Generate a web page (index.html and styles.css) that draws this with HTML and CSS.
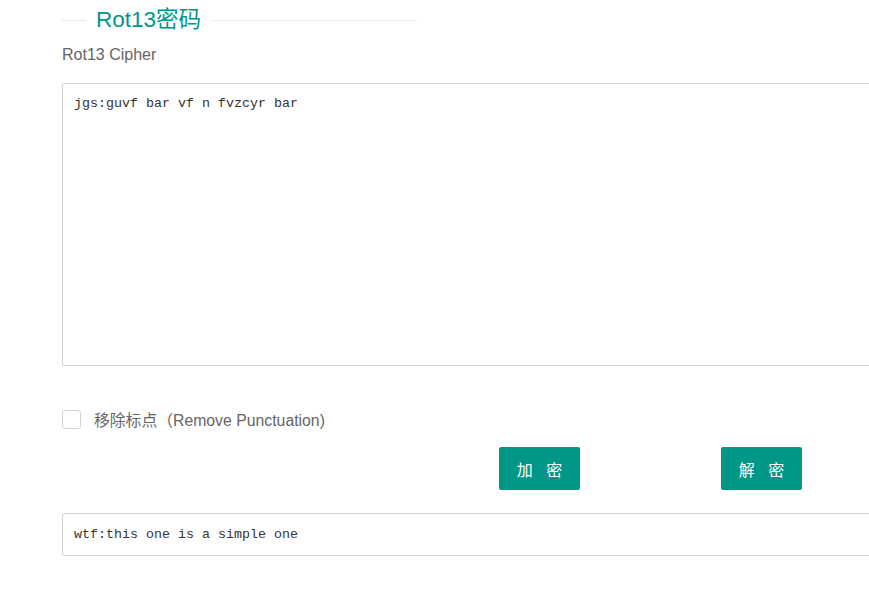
FILE: index.html
```html
<!DOCTYPE html>
<html lang="zh-CN">
<head>
  <meta charset="UTF-8" />
  <title>Rot13密码</title>
  <link rel="stylesheet" href="styles.css">
</head>
<body>
  <div class="container">
    <fieldset class="field-title">
      <legend>Rot13密码</legend>
    </fieldset>
    <p class="sub">Rot13 Cipher</p>

    <textarea class="input-box">jgs:guvf bar vf n fvzcyr bar</textarea>

    <label class="check">
      <span class="box"></span>
      <span>移除标点（Remove Punctuation)</span>
    </label>

    <div class="actions">
      <button class="btn">加 密</button>
      <button class="btn">解 密</button>
    </div>

    <div class="output">wtf:this one is a simple one</div>
  </div>
</body>
</html>
```

FILE: styles.css
```css
* {
  margin: 0;
  padding: 0;
  box-sizing: border-box;
}
html, body {
  overflow: hidden;
}
body {
  font-family: Arial, "Liberation Sans", "Noto Sans CJK SC", sans-serif;
  color: #666;
  background: #fff;
}
.container {
  width: 900px;
  padding-left: 62px;
  padding-top: 8px;
}
.field-title {
  width: 355px;
  border: none;
  border-top: 1px solid #e6e6e6;
  margin-top: 0;
}
.field-title legend {
  margin-left: 24px;
  padding: 0 10px;
  font-size: 22.5px;
  line-height: 24px;
  color: #009688;
}
.sub {
  margin-top: 13px;
  font-size: 16px;
  line-height: 20px;
  color: #666;
}
.input-box {
  display: block;
  width: 840px;
  height: 283px;
  margin-top: 18px;
  padding: 10px 11px;
  border: 1px solid #d2d2d2;
  border-radius: 2px;
  font-family: "Liberation Mono", monospace;
  font-size: 13.33px;
  line-height: 20px;
  color: #333;
  resize: none;
  outline: none;
}
.check {
  display: flex;
  align-items: center;
  gap: 13px;
  margin-top: 42px;
  font-size: 15.8px;
  color: #666;
}
.check .box {
  width: 19px;
  height: 19px;
  border: 1px solid #d2d2d2;
  border-radius: 3px;
  background: #fff;
}
.actions {
  display: flex;
  gap: 141px;
  margin-top: 16px;
  padding-left: 437px;
}
.btn {
  width: 81px;
  height: 43px;
  padding-left: 5px;
  border: none;
  border-radius: 2px;
  background: #009688;
  color: #fff;
  font-family: "Noto Sans CJK SC", sans-serif;
  font-size: 16px;
  letter-spacing: 5px;
  cursor: pointer;
}
.output {
  width: 840px;
  height: 43px;
  margin-top: 23px;
  padding: 0 11px;
  border: 1px solid #d2d2d2;
  border-radius: 2px;
  font-family: "Liberation Mono", monospace;
  font-size: 13.33px;
  line-height: 41px;
  color: #333;
}
```
